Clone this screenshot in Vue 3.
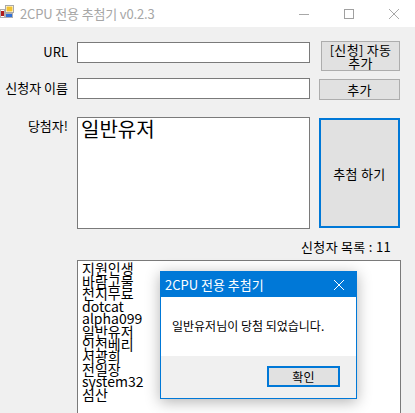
<script setup>
const applicants = ['지원인생', '바람고물', '천지무료', 'dotcat', 'alpha099', '일반유저', '인천베리', '서광희', '전일장', 'system32', '심산']
</script>

<template>
  <div class="window">
    <div class="titlebar">
      <svg class="app-icon" width="14" height="14" viewBox="0 0 14 14">
        <rect x="0.5" y="4.5" width="4" height="8" fill="#fff" stroke="#b0b0b0" />
        <rect x="1" y="6" width="3" height="5" fill="#b01c1c" />
        <rect x="5.5" y="0.5" width="8" height="7" fill="#fff" stroke="#a8a8a8" />
        <rect x="6.5" y="1.5" width="6" height="5" fill="#f2c230" />
        <rect x="5.5" y="8.5" width="7" height="4" fill="#fff" stroke="#b0b0b0" />
        <rect x="6" y="9" width="6" height="3" fill="#2f6fd6" />
      </svg>
      <span class="title">2CPU 전용 추첨기 v0.2.3</span>
      <div class="controls">
        <svg width="12" height="12" viewBox="0 0 12 12"><path d="M1 6.5h10" stroke="#a8a8a8" fill="none" /></svg>
        <svg width="12" height="12" viewBox="0 0 12 12"><rect x="1.5" y="1.5" width="9" height="9" stroke="#a0a0a0" fill="none" /></svg>
        <svg width="12" height="12" viewBox="0 0 12 12"><path d="M1 1l10 10M11 1L1 11" stroke="#a8a8a8" fill="none" /></svg>
      </div>
    </div>

    <div class="form">
      <label class="label url-label">URL</label>
      <input class="field url-field" type="text" />
      <button class="btn auto-btn">[신청] 자동<br />추가</button>

      <label class="label name-label">신청자 이름</label>
      <input class="field name-field" type="text" />
      <button class="btn add-btn">추가</button>

      <label class="label winner-label">당첨자!</label>
      <div class="field winner">일반유저</div>
      <button class="btn draw-btn">추첨 하기</button>

      <div class="count">신청자 목록 : 11</div>
      <ul class="field list">
        <li v-for="name in applicants" :key="name">{{ name }}</li>
      </ul>
    </div>

    <div class="dialog">
      <div class="dialog-title">
        <span>2CPU 전용 추첨기</span>
        <svg width="12" height="12" viewBox="0 0 12 12"><path d="M1 1l10 10M11 1L1 11" stroke="#fff" fill="none" /></svg>
      </div>
      <div class="dialog-body">일반유저님이 당첨 되었습니다.</div>
      <div class="dialog-foot">
        <button class="btn ok-btn">확인</button>
      </div>
    </div>
  </div>
</template>

<style scoped>
.window {
  position: relative;
  width: 415px;
  height: 413px;
  overflow: hidden;
  background: #f0f0f0;
  color: #000;
  font-family: "Noto Sans CJK KR", "Liberation Sans", sans-serif;
  font-size: 13px;
}

.titlebar {
  display: flex;
  align-items: center;
  height: 27px;
  background: #fff;
}

.app-icon {
  margin-right: 6px;
  margin-bottom: 3px;
}

.title {
  color: #a6a6a6;
  font-size: 13px;
  letter-spacing: -0.15px;
  line-height: 22px;
}

.controls {
  display: flex;
  gap: 33px;
  margin-left: auto;
  margin-right: 15px;
}

.form {
  display: grid;
  grid-template-columns: 68px 233px 82px;
  column-gap: 9px;
  align-items: start;
  padding-top: 14px;
}

.label {
  justify-self: end;
  font-size: 13px;
  line-height: 20px;
  white-space: nowrap;
}

.url-label {
  margin-top: 1px;
}

.name-label {
  margin-top: 7px;
}

.field {
  box-sizing: border-box;
  display: block;
  margin: 0;
  border: 1px solid #7a7a7a;
  background: #fff;
}

.url-field {
  height: 21px;
  width: 233px;
  margin-top: 1px;
}

.name-field {
  height: 21px;
  width: 233px;
  margin-top: 7px;
}

.btn {
  box-sizing: border-box;
  padding: 0;
  border: 1px solid #adadad;
  background: #e1e1e1;
  color: #000;
  font-family: inherit;
  font-size: 13px;
  letter-spacing: 0.3px;
  line-height: 13px;
}

.auto-btn {
  width: 79px;
  height: 30px;
  margin-left: 2px;
}

.add-btn {
  width: 81px;
  height: 21px;
  margin-top: 8px;
}

.winner-label {
  margin-top: 16px;
}

.winner {
  margin-top: 17px;
  padding: 0 3px;
  height: 112px;
  font-size: 20px;
  line-height: 22px;
}

.draw-btn {
  width: 81px;
  height: 110px;
  margin-top: 18px;
  border: 2px solid #0078d7;
}

.count {
  grid-column: 2 / 4;
  justify-self: end;
  margin-top: 10px;
  margin-right: 10px;
  font-size: 13px;
  letter-spacing: 0.3px;
  line-height: 16px;
}

.list {
  grid-column: 2 / 4;
  height: 170px;
  margin-top: 5px;
  padding: 1px 4px;
  list-style: none;
  font-size: 14px;
  line-height: 12.6px;
}

.list li {
  height: 12.6px;
  white-space: nowrap;
}

.dialog {
  position: absolute;
  left: 160px;
  top: 271px;
  box-sizing: border-box;
  width: 197px;
  height: 128px;
  border: 1px solid #0078d7;
  background: #f0f0f0;
  box-shadow: 0 3px 14px rgba(0, 0, 0, 0.3);
}

.dialog-title {
  display: flex;
  align-items: center;
  justify-content: space-between;
  height: 25px;
  padding: 0 11px 0 4px;
  background: #0078d7;
  color: #fff;
  font-size: 13px;
}

.dialog-body {
  box-sizing: border-box;
  height: 59px;
  padding: 20px 0 0 11px;
  background: #fff;
  font-size: 12px;
  line-height: 18px;
  white-space: nowrap;
}

.dialog-foot {
  display: flex;
  justify-content: flex-end;
  padding: 10px 16px 0 0;
}

.ok-btn {
  width: 73px;
  height: 21px;
  border: 2px solid #0078d7;
  font-size: 12px;
}
</style>

<style>
html, body {
  margin: 0;
  background: #f0f0f0;
}
</style>
